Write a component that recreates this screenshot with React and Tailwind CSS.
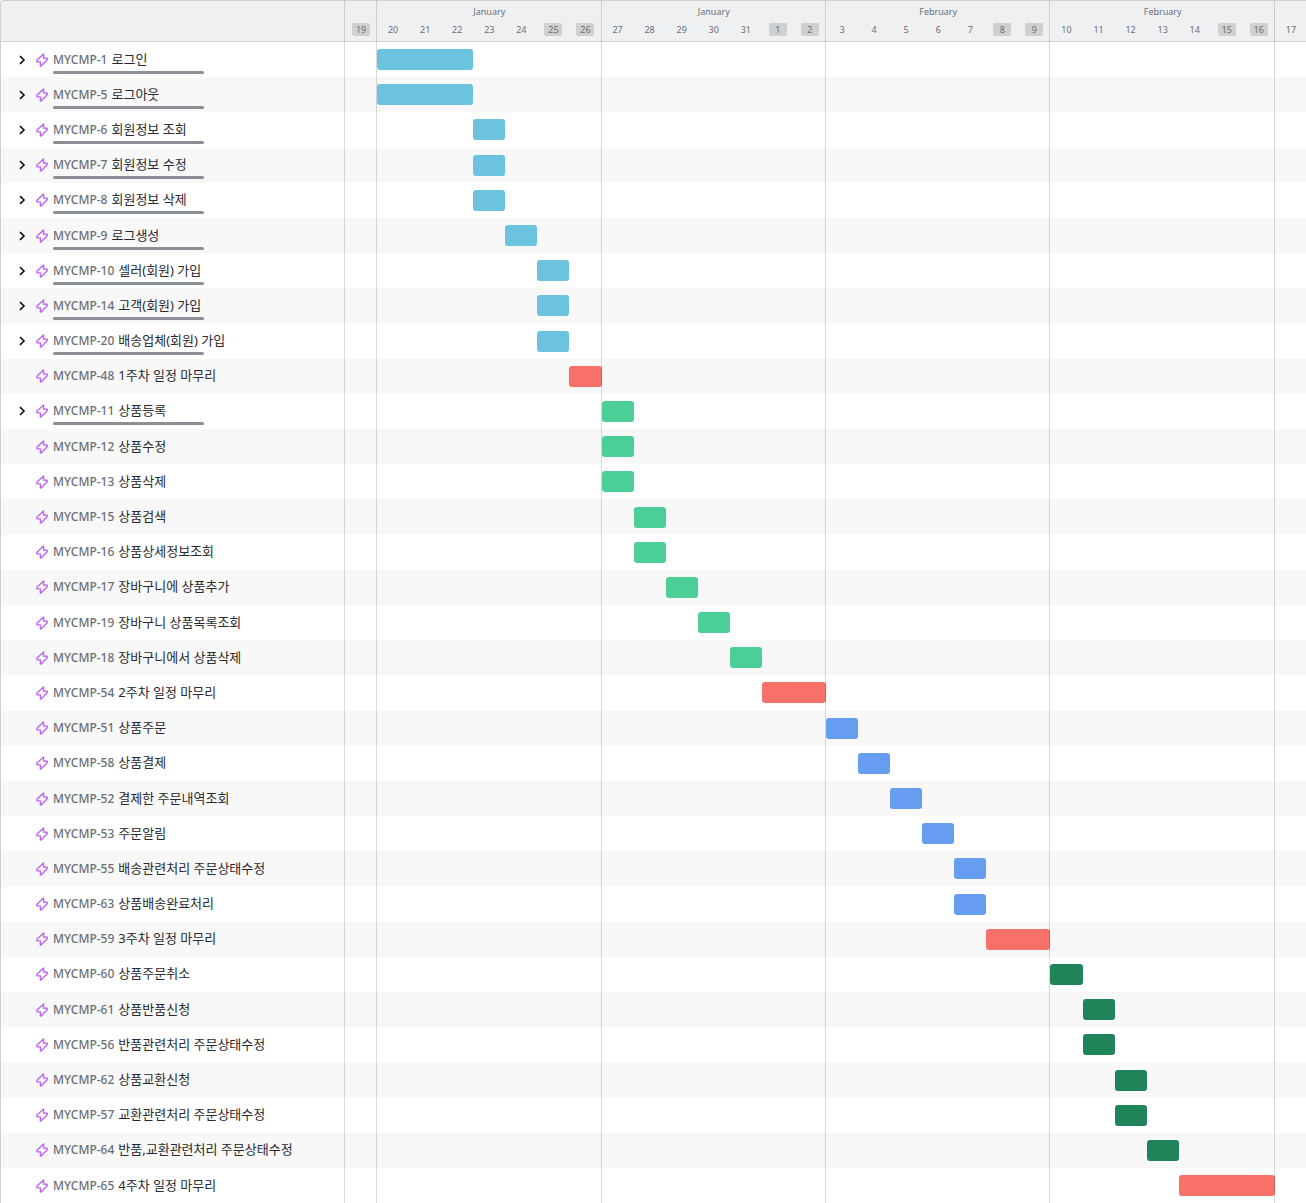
import { useState } from "react";

const SKY = "bg-[#6cc3e0]";
const RED = "bg-[#f87168]";
const MINT = "bg-[#4bce97]";
const BLUE = "bg-[#669df1]";
const GREEN = "bg-[#1f845a]";

// start: column of the first day (1 = January 19), days: length of the bar
const issues = [
  { id: 1, title: "로그인", start: 2, days: 3, color: SKY, parent: true },
  { id: 5, title: "로그아웃", start: 2, days: 3, color: SKY, parent: true },
  { id: 6, title: "회원정보 조회", start: 5, days: 1, color: SKY, parent: true },
  { id: 7, title: "회원정보 수정", start: 5, days: 1, color: SKY, parent: true },
  { id: 8, title: "회원정보 삭제", start: 5, days: 1, color: SKY, parent: true },
  { id: 9, title: "로그생성", start: 6, days: 1, color: SKY, parent: true },
  { id: 10, title: "셀러(회원) 가입", start: 7, days: 1, color: SKY, parent: true },
  { id: 14, title: "고객(회원) 가입", start: 7, days: 1, color: SKY, parent: true },
  { id: 20, title: "배송업체(회원) 가입", start: 7, days: 1, color: SKY, parent: true },
  { id: 48, title: "1주차 일정 마무리", start: 8, days: 1, color: RED },
  { id: 11, title: "상품등록", start: 9, days: 1, color: MINT, parent: true },
  { id: 12, title: "상품수정", start: 9, days: 1, color: MINT },
  { id: 13, title: "상품삭제", start: 9, days: 1, color: MINT },
  { id: 15, title: "상품검색", start: 10, days: 1, color: MINT },
  { id: 16, title: "상품상세정보조회", start: 10, days: 1, color: MINT },
  { id: 17, title: "장바구니에 상품추가", start: 11, days: 1, color: MINT },
  { id: 19, title: "장바구니 상품목록조회", start: 12, days: 1, color: MINT },
  { id: 18, title: "장바구니에서 상품삭제", start: 13, days: 1, color: MINT },
  { id: 54, title: "2주차 일정 마무리", start: 14, days: 2, color: RED },
  { id: 51, title: "상품주문", start: 16, days: 1, color: BLUE },
  { id: 58, title: "상품결제", start: 17, days: 1, color: BLUE },
  { id: 52, title: "결제한 주문내역조회", start: 18, days: 1, color: BLUE },
  { id: 53, title: "주문알림", start: 19, days: 1, color: BLUE },
  { id: 55, title: "배송관련처리 주문상태수정", start: 20, days: 1, color: BLUE },
  { id: 63, title: "상품배송완료처리", start: 20, days: 1, color: BLUE },
  { id: 59, title: "3주차 일정 마무리", start: 21, days: 2, color: RED },
  { id: 60, title: "상품주문취소", start: 23, days: 1, color: GREEN },
  { id: 61, title: "상품반품신청", start: 24, days: 1, color: GREEN },
  { id: 56, title: "반품관련처리 주문상태수정", start: 24, days: 1, color: GREEN },
  { id: 62, title: "상품교환신청", start: 25, days: 1, color: GREEN },
  { id: 57, title: "교환관련처리 주문상태수정", start: 25, days: 1, color: GREEN },
  { id: 64, title: "반품,교환관련처리 주문상태수정", start: 26, days: 1, color: GREEN },
  { id: 65, title: "4주차 일정 마무리", start: 27, days: 3, color: RED },
];

const weeks = [
  { month: "", span: "col-span-1", days: [19] },
  { month: "January", span: "col-span-7", days: [20, 21, 22, 23, 24, 25, 26] },
  { month: "January", span: "col-span-7", days: [27, 28, 29, 30, 31, 1, 2] },
  { month: "February", span: "col-span-7", days: [3, 4, 5, 6, 7, 8, 9] },
  { month: "February", span: "col-span-7", days: [10, 11, 12, 13, 14, 15, 16] },
  { month: "", span: "col-span-1", days: [17] },
];

const weekends = new Set([19, 25, 26, 1, 2, 8, 9, 15, 16]);
const columns = "grid grid-cols-[repeat(30,minmax(0,1fr))]";

function EpicIcon() {
  return (
    <svg viewBox="0 0 12 14" className="h-[14px] w-3 shrink-0" fill="none" stroke="#bf63f3" strokeWidth="1.4" strokeLinejoin="round" aria-hidden="true">
      <path d="M7.6 0.9 0.9 7.2 0.9 8.7 4.4 8.9 4.4 13.1 5 13.1 11.2 6.8 11.2 5.3 7.6 5.1 7.6 0.9Z" />
    </svg>
  );
}

function Expander({ label }) {
  const [open, setOpen] = useState(false);
  return (
    <button type="button" aria-label={label} aria-expanded={open} onClick={() => setOpen(!open)} className="flex size-4 items-center justify-center">
      <svg viewBox="0 0 8 10" className="h-[10px] w-2" fill="none" stroke="#111" strokeWidth="1.6" aria-hidden="true">
        <path d="M2 1.2 6 5 2 8.8" />
      </svg>
    </button>
  );
}

function IssueRow({ issue }) {
  const key = `MYCMP-${issue.id}`;
  return (
    <li className="flex min-h-8 flex-1 odd:bg-white even:bg-[#f8f8f8]">
      <div className="flex w-[344px] shrink-0 items-center pl-[13px]">
        <div className="flex w-[22px] shrink-0">{issue.parent && <Expander label={`Expand ${key}`} />}</div>
        <EpicIcon />
        <div className="relative flex h-7 items-center pl-[5px]">
          <a href={`#${key}`} className="flex items-baseline gap-1 whitespace-nowrap text-xs leading-4">
            <span className="font-medium text-[#6b6e76]">{key}</span>
            <span className="pb-0.5 text-[13px] leading-4 text-[#292a2e]">{issue.title}</span>
          </a>
          {issue.parent && <span className="absolute bottom-0 left-[5px] h-[3px] w-[151px] rounded-full bg-[#8c8f97]" />}
        </div>
      </div>
      <div className={`${columns} -mr-px min-w-0 flex-1 items-center`}>
        <div
          className={`${issue.color} h-[21px] rounded-[3px]`}
          style={{ gridColumn: `${issue.start} / span ${issue.days}` }}
        />
      </div>
    </li>
  );
}

export default function App() {
  return (
    <main className="relative flex min-h-screen flex-col overflow-hidden rounded-tl border-t border-l border-[#cfd0d2] bg-white font-['Noto_Sans','Noto_Sans_CJK_KR',sans-serif]">
      <header className="flex h-[41px] shrink-0 border-b border-[#d3d4d6] bg-[#eff0f2] text-[9px] leading-3 text-[#6b6e76]">
        <div className="w-[344px] shrink-0" />
        <div className={`${columns} -mr-px min-w-0 flex-1`}>
          {weeks.map((week, i) => (
            <div key={i} className={`${week.span} flex flex-col`}>
              <div className="mt-1 h-[18px] pt-px text-center">{week.month}</div>
              <div className="flex">
                {week.days.map((day) => (
                  <div key={day} className="flex flex-1 justify-center">
                    <span className={weekends.has(day) ? "h-[13px] w-[18px] rounded-xs bg-[#cfd0d0] text-center leading-[14px]" : "h-[13px] text-center leading-[14px]"}>{day}</span>
                  </div>
                ))}
              </div>
            </div>
          ))}
        </div>
      </header>
      <ul className="flex flex-1 flex-col">
        {issues.map((issue) => (
          <IssueRow key={issue.id} issue={issue} />
        ))}
      </ul>
      <div className="pointer-events-none absolute inset-0 flex" aria-hidden="true">
        <div className="w-[343px] shrink-0" />
        <div className={`${columns} min-w-0 flex-1`}>
          {weeks.map((week, i) => (
            <div key={i} className={`${week.span} border-l border-black/15`} />
          ))}
        </div>
      </div>
    </main>
  );
}
